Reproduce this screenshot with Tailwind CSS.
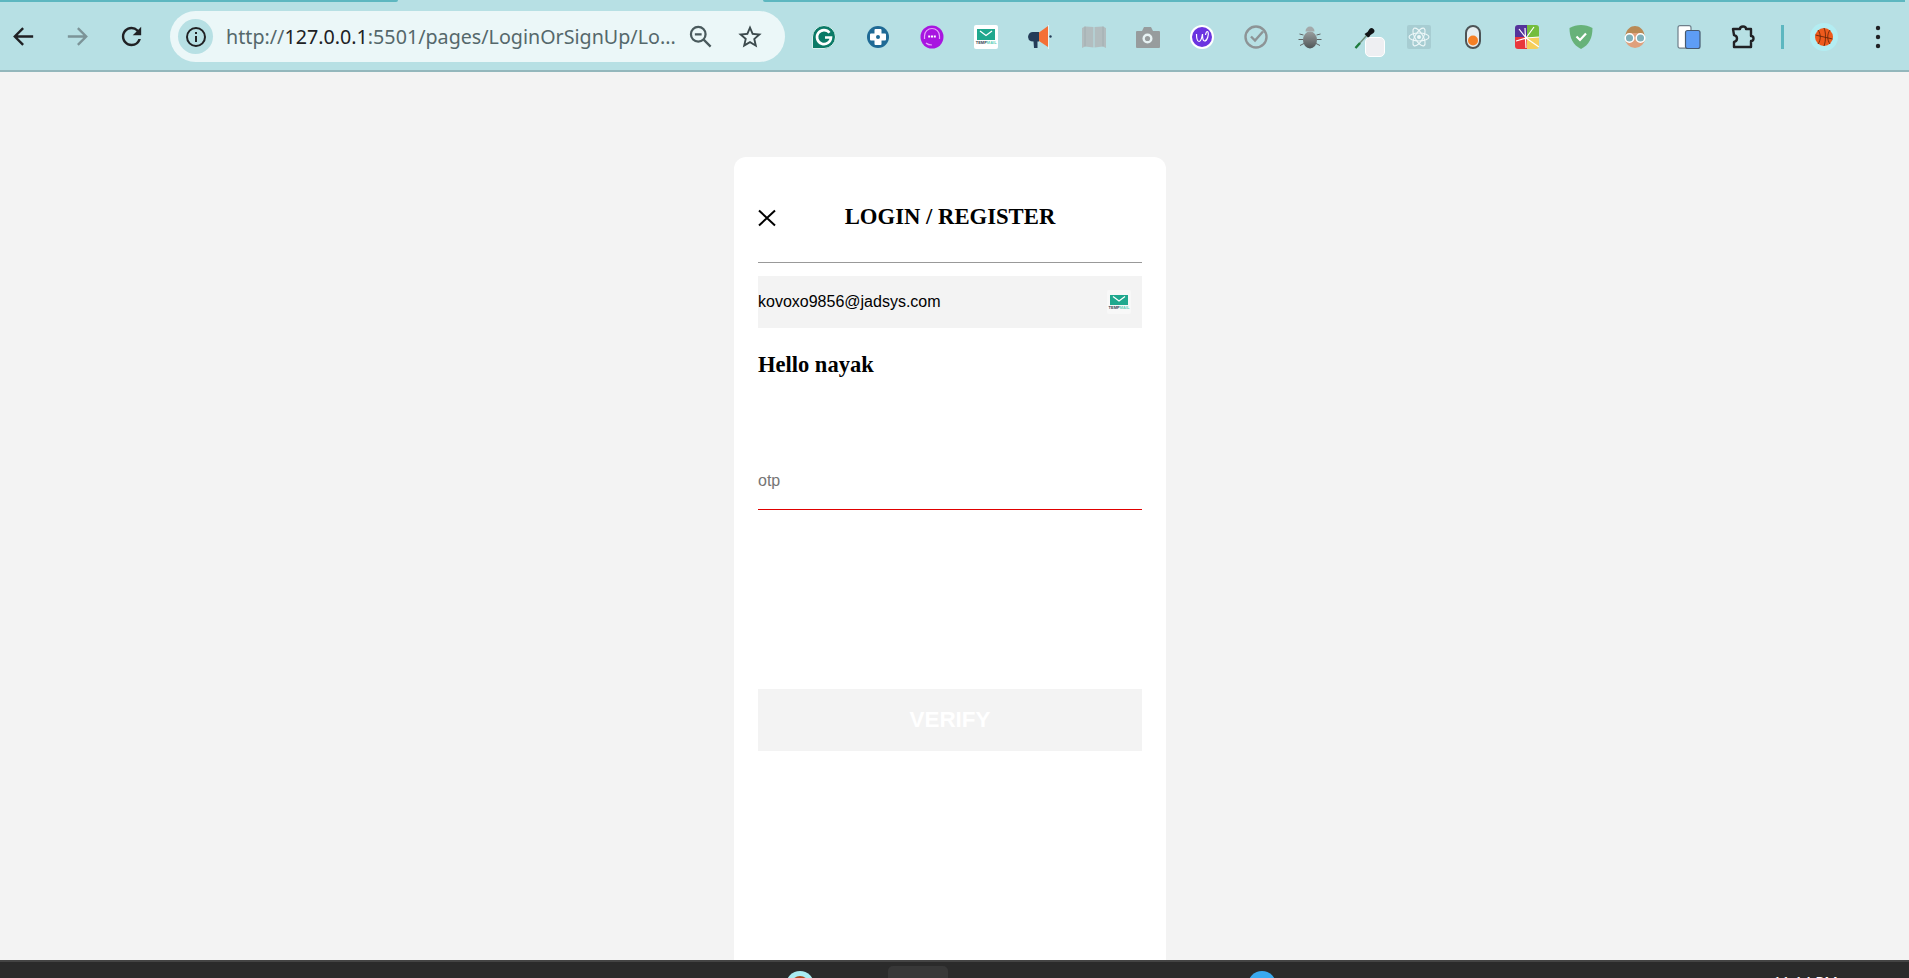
<!DOCTYPE html>
<html lang="en">
<head>
  <meta charset="UTF-8" />
  <title>Login / Register</title>
  <script src="https://cdn.jsdelivr.net/npm/@tailwindcss/browser@4"></script>
</head>
<body class="h-screen overflow-hidden flex flex-col bg-[#f3f3f3] font-['Liberation_Sans',sans-serif]">

  <!-- browser toolbar -->
  <header class="relative h-[72px] shrink-0 flex items-center pt-[3px] bg-[#b7e0e4] border-b-2 border-[#93b7bc]">
    <!-- tab strip remains -->
    <div class="absolute top-0 left-0 w-[398px] h-[2px] bg-[#5db7c0] rounded-br-[3px]"></div>
    <div class="absolute top-0 left-[763px] right-[4px] h-[2px] bg-[#5db7c0] rounded-bl-[3px]"></div>

    <div class="flex items-center gap-[18px] pl-[5px]">
      <button class="w-9 h-9 flex items-center justify-center">
        <svg class="w-[29px] h-[29px]" viewBox="0 0 24 24" fill="#202124"><path d="M20 10.900H7.200l5.200-5.200L11 4.400 3.400 12l7.600 7.600 1.400-1.300-5.200-5.200H20z"/></svg>
      </button>
      <button class="w-9 h-9 flex items-center justify-center">
        <svg class="w-[29px] h-[29px]" viewBox="0 0 24 24" fill="#7c9498"><path d="M4 10.900h12.800l-5.200-5.200L13 4.400l7.600 7.600-7.600 7.600-1.400-1.300 5.200-5.200H4z"/></svg>
      </button>
      <button class="w-9 h-9 flex items-center justify-center">
        <svg class="w-[29px] h-[29px]" viewBox="0 0 24 24" fill="#202124"><path d="M17.650 6.350A7.958 7.958 0 0012 4c-4.420 0-7.990 3.580-7.990 8s3.570 8 7.990 8c3.730 0 6.840-2.550 7.730-6h-2.080A5.990 5.990 0 0112 18c-3.310 0-6-2.690-6-6s2.690-6 6-6c1.660 0 3.140.69 4.220 1.780L13 11h7V4l-2.350 2.350z"/></svg>
      </button>
    </div>

    <!-- address bar -->
    <div class="ml-[21px] w-[615px] h-[51px] rounded-full bg-[#ebf7f8] flex items-center pl-2 pr-[20px]">
      <div class="w-[35px] h-[35px] rounded-full bg-[#b7e0e4] flex items-center justify-center shrink-0">
        <svg class="w-6 h-6" viewBox="0 0 24 24" fill="none" stroke="#202124" stroke-width="2"><circle cx="12" cy="12" r="9"/><path d="M12 11v6M12 7v2"/></svg>
      </div>
      <span class="ml-[13px] w-[450px] shrink-0 whitespace-nowrap font-['Noto_Sans',sans-serif] text-[19.7px] text-[#55686b]">http://<span class="text-[#202124]">127.0.0.1</span>:5501/pages/LoginOrSignUp/Lo...</span>
      <svg class="ml-[11px] w-[27px] h-[27px] shrink-0" viewBox="0 0 24 24" fill="none" stroke="#4a5a5d" stroke-width="2"><circle cx="10" cy="10" r="6.500"/><path d="M14.800 14.800 21 21M7 10h6"/></svg>
      <svg class="ml-[22px] w-[28px] h-[28px] shrink-0" viewBox="0 0 24 24" fill="#3c4a4d"><path d="M22 9.240l-7.190-.62L12 2 9.190 8.630 2 9.240l5.460 4.730L5.820 21 12 17.270 18.180 21l-1.630-7.030L22 9.240zM12 15.400l-3.760 2.270 1-4.280-3.320-2.880 4.380-.38L12 6.100l1.710 4.040 4.380.38-3.320 2.880 1 4.280L12 15.400z"/></svg>
    </div>

    <!-- extensions -->
    <div class="ml-3 flex items-center">
      <!-- grammarly -->
      <div class="w-[54.05px] flex justify-center"><svg class="w-6 h-6" viewBox="0 0 24 24"><path d="M12 .5a11.500 11.500 0 0 1 0 23H.5V12A11.500 11.500 0 0 1 12 .5z" fill="#0b7a67" stroke="#d8f0ee" stroke-width="1"/><path d="M17.500 7.800A7 7 0 1 0 19 12.500h-6" fill="none" stroke="#fff" stroke-width="2.600"/></svg></div>
      <!-- cross -->
      <div class="w-[54.05px] flex justify-center"><svg class="w-6 h-6" viewBox="0 0 24 24"><circle cx="12" cy="12" r="11" fill="#1f6a95"/><path d="M9.500 4h5a1 1 0 0 1 1 1v3.500H19a1 1 0 0 1 1 1v5a1 1 0 0 1-1 1h-3.500V19a1 1 0 0 1-1 1h-5a1 1 0 0 1-1-1v-3.500H5a1 1 0 0 1-1-1v-5a1 1 0 0 1 1-1h3.500V5a1 1 0 0 1 1-1z" fill="#fff"/><circle cx="12" cy="12" r="2" fill="#1f6a95"/></svg></div>
      <!-- purple robot -->
      <div class="w-[54.05px] flex justify-center"><svg class="w-6 h-6" viewBox="0 0 24 24"><circle cx="12" cy="12" r="11.500" fill="#a815e0"/><path d="M4.500 14v-3a7.500 7.500 0 0 1 15 0v3M6 18c2 2 4 2 6 2" fill="none" stroke="#e3a6fa" stroke-width="1.200"/><path d="M8.200 11.500h2M11 11.500h2M13.800 11.500h2" stroke="#fff" stroke-width="1.800"/></svg></div>
      <!-- tempmail -->
      <div class="w-[54.05px] flex justify-center"><div class="w-6 h-6 bg-white rounded-[2px] flex flex-col items-center justify-center"><svg class="w-[18px] h-[11px]" viewBox="0 0 18 11"><rect width="18" height="11" fill="#1fa88e"/><path d="M3 2 9 6.500 15 2" fill="none" stroke="#fff" stroke-width="1.300"/></svg><span class="text-[4px] leading-[5px] font-bold whitespace-nowrap text-[#2d3f50]">TEMP<span class="text-[#5fcfb8]">MAIL</span></span></div></div>
      <!-- megaphone -->
      <div class="w-[54.05px] flex justify-center"><svg class="w-6 h-6" viewBox="0 0 24 24"><path d="M9 7H5a4.800 4.800 0 0 0-2 9.200l2.500.3L6 23h3.500v-6.500H11V7z" fill="#243c58"/><path d="M11 7.500 20 1v21l-9-6z" fill="#f47036"/><rect x="20" y="0" width="1" height="24" fill="#e8f4f5"/><circle cx="22.500" cy="11.500" r="1.200" fill="#243c58"/></svg></div>
      <!-- book -->
      <div class="w-[54.05px] flex justify-center"><svg class="w-6 h-6" viewBox="0 0 24 24" fill="#b2bdbf"><path d="M0 3 3 1.500 11.500 2v20.500L3 21.500l-3 1.500z"/><path d="M24 3l-3-1.500L12.500 2v20.500l8.500-1 3 1.500z"/><path d="M3 1.500v20M21 1.500v20" stroke="#a2aeb1" stroke-width="1" fill="none"/></svg></div>
      <!-- camera -->
      <div class="w-[54.05px] flex justify-center"><svg class="w-6 h-6" viewBox="0 0 24 24"><path d="M1 6h5l2-4h7l2 4h6a1 1 0 0 1 1 1v15a1 1 0 0 1-1 1H1a1 1 0 0 1-1-1V7a1 1 0 0 1 1-1z" fill="#979c9d"/><circle cx="11.500" cy="13.500" r="5" fill="#e7f2f3"/><circle cx="11.500" cy="13.500" r="2.600" fill="#979c9d"/></svg></div>
      <!-- w -->
      <div class="w-[54.05px] flex justify-center"><svg class="w-6 h-6" viewBox="0 0 24 24"><circle cx="12" cy="12" r="12" fill="#fff"/><circle cx="12" cy="12" r="10" fill="#6b34e0"/><path d="M6.500 9c0 3 .5 7.500 2.500 7.500S12 12 12.500 9c0 3 0 7 2 7 3 0 4.500-7 3.500-9-1-1.500-2 .5-2.500 3" fill="none" stroke="#fff" stroke-width="1.200"/></svg></div>
      <!-- check -->
      <div class="w-[54.05px] flex justify-center"><svg class="w-6 h-6" viewBox="0 0 24 24" fill="none" stroke="#8d9496" stroke-width="2.400"><circle cx="12" cy="12" r="10.500"/><path d="m7 11.500 4 4 8-9"/></svg></div>
      <!-- bug -->
      <div class="w-[54.05px] flex justify-center"><svg class="w-6 h-6" viewBox="0 0 24 24"><defs><linearGradient id="bugBody" x1="0" y1="0" x2="0" y2="1"><stop offset="0" stop-color="#9a9fa0"/><stop offset="1" stop-color="#4f5556"/></linearGradient></defs><ellipse cx="12" cy="15" rx="7" ry="8.500" fill="url(#bugBody)"/><path d="M7.500 6.500a4.500 5 0 0 1 9 0z" fill="#a3a9aa"/><path d="M5.500 10 1.500 9M5 14.500H.5M6 18.500l-4 2M18.500 10l4-1M19 14.500h4.500M18 18.500l4 2" stroke="#5f6566" stroke-width="1"/></svg></div>
      <!-- eyedropper -->
      <div class="w-[54.05px] h-[24px] flex justify-center relative"><svg class="w-6 h-6 relative left-[2px]" viewBox="0 0 24 24"><path d="M1.500 23 13 10" stroke="#6f8f7c" stroke-width="1.400"/><path d="M1.500 23 6 18" stroke="#1e7d3e" stroke-width="2.400"/><path d="M14.500 13l-4-4 3-2 2-3a2.500 2.500 0 0 1 4 4l-3 2z" fill="#111416"/></svg><div class="absolute left-[28px] top-[12px] w-5 h-5 bg-[#eeeff2] border border-white rounded-[5px]"></div></div>
      <!-- react -->
      <div class="w-[54.05px] flex justify-center"><svg class="w-6 h-6" viewBox="0 0 24 24"><rect width="24" height="24" rx="2" fill="#a7cdd2"/><g fill="none" stroke="#eef8f9" stroke-width="1.100"><ellipse cx="12" cy="12" rx="10" ry="4"/><ellipse cx="12" cy="12" rx="10" ry="4" transform="rotate(60 12 12)"/><ellipse cx="12" cy="12" rx="10" ry="4" transform="rotate(120 12 12)"/></g><circle cx="12" cy="12" r="2" fill="#eef8f9"/></svg></div>
      <!-- toggle -->
      <div class="w-[54.05px] flex justify-center"><svg class="w-6 h-6" viewBox="0 0 24 24"><rect x="5" y="1" width="14" height="22" rx="7" fill="#e6eef0" stroke="#4d5456" stroke-width="2"/><circle cx="12" cy="15.500" r="5" fill="#f58025"/></svg></div>
      <!-- colourful tile -->
      <div class="w-[54.05px] flex justify-center"><svg class="w-6 h-6 rounded-[3px]" viewBox="0 0 24 24"><rect width="12" height="12" fill="#55339a"/><rect x="12" width="12" height="12" fill="#74bd3c"/><rect y="12" width="12" height="12" fill="#e8373c"/><rect x="12" y="12" width="12" height="12" fill="#f6cf5c"/><path d="M11 23 10 3M11 13 4 4M11 13l8-11M11 13l13-1M11 13 1 16M11 13l13 9" stroke="#fff" stroke-width="1.200"/></svg></div>
      <!-- adguard -->
      <div class="w-[54.05px] flex justify-center"><svg class="w-6 h-6" viewBox="0 0 24 24"><path d="M12 0c4 0 8 1 11.500 3C23.500 13 20 20 12 24 4 20 .5 13 .5 3 4 1 8 0 12 0z" fill="#67b279"/><path d="m7.500 11.500 3.500 3.500 6-6.500" fill="none" stroke="#fff" stroke-width="2.200"/></svg></div>
      <!-- face -->
      <div class="w-[54.05px] flex justify-center"><svg class="w-6 h-6" viewBox="0 0 24 24"><circle cx="12" cy="13" r="10" fill="#e0a07c"/><path d="M2.500 11C3 4 8 1 12 1s9 3 9.500 10l-4-3h-11z" fill="#b98a56"/><circle cx="6.500" cy="13" r="4.300" fill="#7fb0ba" stroke="#fff" stroke-width="1.500"/><circle cx="17.500" cy="13" r="4.300" fill="#7fb0ba" stroke="#fff" stroke-width="1.500"/></svg></div>
      <!-- phone -->
      <div class="w-[54.05px] flex justify-center"><svg class="w-6 h-6" viewBox="0 0 24 24"><rect x="1" y=".7" width="13" height="22.500" rx="2" fill="#fff" stroke="#6f7f8a" stroke-width="1.200"/><rect x="8.500" y="5.500" width="14.500" height="18" rx="2" fill="#5e9df5" stroke="#475a70" stroke-width="1.200"/></svg></div>
      <!-- puzzle -->
      <div class="w-[54.05px] flex justify-center"><svg class="w-6 h-6" viewBox="0 0 24 24" fill="none" stroke="#202124" stroke-width="2.400" stroke-linejoin="round"><path d="M2 4h7a3 2.500 0 0 1 6 0h5v7a2.500 2.500 0 0 1 0 5v6H3v-5c2-.5 3-2 3-3.500S5 10.500 3 10z"/></svg></div>
      <div class="w-[3px] h-[24px] bg-[#5db7c0] ml-[11px]"></div>
      <!-- basketball -->
      <div class="ml-[26px] w-[28px] h-[28px] rounded-full bg-[#b3edf2] flex items-center justify-center"><svg class="w-[18px] h-[18px]" viewBox="0 0 18 18"><circle cx="9" cy="9" r="9" fill="#ee5a1c"/><path d="M.5 7 17.500 11M9 0c2 4 2 13 0 18M3 2c3 4 3 10 0 14M15 2c-3 4-3 10 0 14" fill="none" stroke="#5a2208" stroke-width=".8"/></svg></div>
      <svg class="ml-[36px] w-[8px] h-[24px]" viewBox="0 0 8 24" fill="#202124"><circle cx="4" cy="3" r="2.200"/><circle cx="4" cy="12" r="2.200"/><circle cx="4" cy="21" r="2.200"/></svg>
    </div>
  </header>

  <!-- page -->
  <main class="flex-1 min-h-0 overflow-hidden flex justify-center pt-[85px] pr-[9px]">
    <section class="w-[432px] h-[900px] shrink-0 bg-white rounded-t-xl px-6 pt-[46px]">
      <div class="flex items-center h-[30px]">
        <svg class="w-[18px] h-[18px] shrink-0" viewBox="0 0 18 18" fill="none" stroke="#000" stroke-width="2"><path d="M1 1.500 17 16.500M17 1.500 1 16.500"/></svg>
        <h1 class="flex-1 pr-[18px] text-center font-['Liberation_Serif',serif] font-bold text-[22.7px] text-black -mt-[2px]">LOGIN / REGISTER</h1>
      </div>
      <div class="mt-[29px] h-px bg-[#999]"></div>
      <div class="mt-[13px] h-[52px] bg-[#f3f3f3] flex items-center justify-between pr-[11px]">
        <span class="text-[16px] text-black">kovoxo9856@jadsys.com</span>
        <div class="w-6 h-6 bg-[#f8f8f8] rounded-[2px] flex flex-col items-center justify-center"><svg class="w-[18px] h-[10px]" viewBox="0 0 18 10"><rect width="18" height="10" fill="#1fa88e"/><path d="M3 1.500 9 6 15 1.500" fill="none" stroke="#fff" stroke-width="1.200"/></svg><span class="text-[4px] leading-[5px] font-bold whitespace-nowrap text-[#2d3f50]">TEMP<span class="text-[#5fcfb8]">MAIL</span></span></div>
      </div>
      <h2 class="mt-[24px] h-[26px] leading-[26px] font-['Liberation_Serif',serif] font-bold text-[22.5px] text-black">Hello nayak</h2>
      <input class="mt-[82px] block w-full h-[50px] pb-[7px] text-[16px] bg-white border-b border-[#e00000] outline-none placeholder:text-[#757575]" placeholder="otp" />
      <button disabled class="mt-[179px] block w-full h-[62px] bg-[#f3f3f3] text-white font-bold text-[22.4px]">VERIFY</button>
    </section>
  </main>

  <!-- windows taskbar, cut off by the screenshot -->
  <footer class="h-[18px] shrink-0 overflow-hidden bg-[#2b2b2b] border-t-2 border-[#444] flex items-start text-white">
    <div class="ml-[786px] mt-[9px] w-[28px] h-[28px] rounded-full bg-[#a9ecf2] flex items-center justify-center"><div class="w-[18px] h-[18px] rounded-full bg-[#a8491f]"></div></div>
    <div class="ml-[74px] mt-[4px] w-[60px] h-[30px] bg-[#383838] rounded-t-[5px]"></div>
    <div class="ml-[300px] mt-[9px] w-[28px] h-[28px] rounded-full bg-[#39a9f0]"></div>
    <span class="ml-[497px] mt-[9px] font-['Noto_Sans',sans-serif] text-[15px] leading-[20px] whitespace-nowrap">11:14 PM</span>
  </footer>
</body>
</html>
